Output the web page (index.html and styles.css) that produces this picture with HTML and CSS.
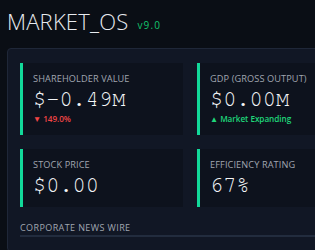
FILE: index.html
```html
<!DOCTYPE html>
<html lang="en">
<head>
  <meta charset="UTF-8">
  <title>MARKET_OS</title>
  <link rel="stylesheet" href="styles.css">
</head>
<body>
  <header class="top">
    <h1>MARKET_OS</h1>
    <span class="ver">v9.0</span>
  </header>

  <section class="panel">
    <div class="stats">
      <div class="card">
        <div class="label">Shareholder Value</div>
        <div class="value">$-0.49M</div>
        <div class="delta down">▼ 149.0%</div>
      </div>
      <div class="card">
        <div class="label">GDP (Gross Output)</div>
        <div class="value">$0.00M</div>
        <div class="delta up">▲ Market Expanding</div>
      </div>
      <div class="card">
        <div class="label">Stock Price</div>
        <div class="value">$0.00</div>
      </div>
      <div class="card">
        <div class="label">Efficiency Rating</div>
        <div class="value">67%</div>
      </div>
    </div>

    <h3 class="wire-title">Corporate News Wire</h3>
  </section>
</body>
</html>
```

FILE: styles.css
```css
body {
  margin: 0;
  padding: 8px 7px;
  background: #0a0e15;
  color: #e8ebf0;
  font-family: "Open Sans", "Liberation Sans", sans-serif;
  overflow: hidden;
}
.top {
  display: flex;
  align-items: flex-end;
  gap: 9px;
}
.top h1 {
  margin: 0;
  font-size: 22px;
  font-weight: 300;
  letter-spacing: 0.2px;
  line-height: 26px;
}
.ver {
  color: #12c46e;
  font-size: 10px;
  letter-spacing: 1.2px;
  line-height: 18px;
}
.panel {
  margin-top: 14px;
  width: 352px;
  padding: 14px 12px;
  background: #111725;
  border: 1px solid #1f2738;
  border-radius: 4px;
}
.stats {
  display: grid;
  grid-template-columns: 163px 163px;
  gap: 14px;
}
.card {
  background: #0d121d;
  border-left: 3px solid #12d99a;
  padding: 9px 10px;
}
.label {
  font-size: 9.2px;
  line-height: 14px;
  letter-spacing: 0.1px;
  text-transform: uppercase;
  color: #a0a6b0;
}
.value {
  font-family: "FreeMono", "Liberation Mono", monospace;
  font-size: 22px;
  line-height: 26px;
  color: #f4f6f8;
}
.delta {
  font-size: 8.2px;
  font-weight: 600;
  letter-spacing: -0.05px;
  line-height: 14px;
}
.down { color: #f04545; }
.up { color: #1fd67a; }
.wire-title {
  margin: 14px 0 0;
  padding-bottom: 1px;
  font-size: 9px;
  font-weight: 400;
  letter-spacing: 0.4px;
  text-transform: uppercase;
  color: #a0a6b0;
  border-bottom: 2px solid #222c3e;
}
```
